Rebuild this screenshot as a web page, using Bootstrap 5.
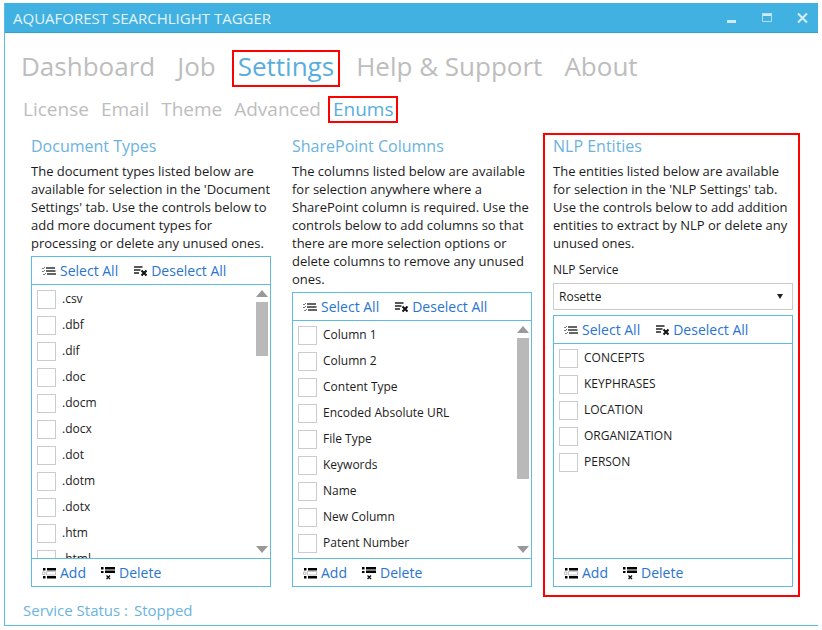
<!DOCTYPE html>
<html lang="en">
<head>
<meta charset="utf-8">
<meta name="viewport" content="width=device-width, initial-scale=1">
<title>Aquaforest Searchlight Tagger</title>
<link rel="stylesheet" href="https://cdn.jsdelivr.net/npm/bootstrap@5.3.0/dist/css/bootstrap.min.css">
<style>
  :root { --accent: #41b1e1; --edge: #5cbce6; --soft: #6bb3de; --link: #2a74d0; --alert: #f00; }
  body { font-family: "Open Sans", "Noto Sans", sans-serif; font-size: 13px; line-height: 18px; color: #1c1c1c; background: #fff; }
  .app-shell { height: 100vh; min-height: 560px; padding: 3px 4px 4px; }
  .app-window { border-left: 1px solid var(--edge); border-bottom: 1px solid var(--edge); }
  .title-bar { background: var(--accent); height: 30px; padding: 0 8px; border-bottom: 1px solid #2fa3d6; }
  .title-bar h1 { font-size: 15px; line-height: 20px; color: #e4f4fb; font-weight: 400; }
  .win-btn { width: 16px; height: 16px; }
  .win-group { gap: 19px; }
  .tab-main { gap: 18px; padding: 21px 14px 0; font-size: 26px; line-height: 25px; }
  .tab-main a { padding: 0 2px 4px; }
  .tab-sub { gap: 10px; padding: 17px 17px 0; font-size: 19px; line-height: 19px; }
  .tab-sub a { padding: 0 1px; }
  .tab-main a, .tab-sub a { color: #bdbdbd; text-decoration: none; white-space: nowrap; }
  .tab-main a.active, .tab-sub a.active { color: #57aede; outline: 2px solid var(--alert); outline-offset: 2px; }
  .enum-grid { display: grid; grid-template-columns: repeat(3, minmax(0, 1fr)); column-gap: 21px; padding: 17px 25px 0 26px; min-height: 0; }
  .enum-col { min-height: 0; }
  .enum-col h2 { font-size: 16px; line-height: 20px; font-weight: 400; color: var(--soft); margin-bottom: 6px; }
  .enum-col p { margin-bottom: 4px; }
  .marked { border: 2px solid var(--alert); margin: -3px -7px -10px -10px; padding: 1px 5px 8px 8px; }
  .nlp-label { font-size: 12px; margin: 5px 0 4px; }
  .nlp-select { font-size: 12px; height: 27px; border: 1px solid #ccc; padding: 0 5px; margin-bottom: 5px; appearance: none; width: 100%; color: #1c1c1c; border-radius: 0;
    background: #fff url("data:image/svg+xml,%3Csvg xmlns='http://www.w3.org/2000/svg' viewBox='0 0 6 5'%3E%3Cpath d='M0 0h6L3 5z' fill='%23222'/%3E%3C/svg%3E") no-repeat right 9px center / 6px 5px; }
  .panel { border: 1px solid var(--edge); min-height: 0; }
  .tool-row { height: 28px; padding: 0 10px; gap: 15px; flex: none; }
  .tool-row.top { border-bottom: 1px solid var(--edge); }
  .tool-row.foot { border-top: 1px solid var(--edge); }
  .tool-btn { border: 0; background: none; padding: 0; color: var(--link); font-size: 14px; line-height: 20px; gap: 4px; white-space: nowrap; }
  .tool-btn svg { width: 14px; height: 14px; flex: none; }
  .items { padding: 1px 0 0 5px; font-size: 12px; min-height: 0; overflow: hidden; }
  .items label { height: 26px; gap: 6px; }
  .items input { appearance: none; width: 19px; height: 19px; border: 1px solid #ccc; background: #fff; margin: 0; flex: none; }
  .scroller { width: 12px; margin: 5px 2px 5px 0; flex: none; }
  .scroller svg { width: 12px; height: 7px; flex: none; }
  .thumb { background: #b9b9b9; margin: 5px 0; }
  .status { color: var(--soft); font-size: 15px; line-height: 20px; padding: 13px 18px 5px; gap: 6px; }
</style>
</head>
<body>
<svg class="d-none" aria-hidden="true">
  <symbol id="i-sel" viewBox="0 0 14 14"><path d="M0 4l1 1 2-2M0 7l1 1 2-2M1 10l1 1 2-2" fill="none" stroke="#555" stroke-width=".8"/><path d="M4 4h9M4 7h9.500M5 10h9" stroke="#333" stroke-width="1.700"/></symbol>
  <symbol id="i-des" viewBox="0 0 14 14"><path d="M1 3h8.500M1 6h6.500M1 9h5" stroke="#222" stroke-width="1.600"/><path d="M8.500 6.500l5 5M13.500 6.500l-5 5" stroke="#111" stroke-width="2"/></symbol>
  <symbol id="i-add" viewBox="0 0 14 14"><path d="M1 2h2.500v2.500H1zM5 2h9v2.500H5zM1 10h2.500v2.500H1zM5 10h9v2.500H5z"/><path d="M4.500 5.500h9v3.500h-9zM.5 6h2.500v2.500H.5z" fill="none" stroke="#aaa" stroke-width=".7"/></symbol>
  <symbol id="i-del" viewBox="0 0 14 14"><path d="M0 1h2.500v2.500H0zM4 1h10v2.500H4zM0 5h2.500v2H0zM4 4.500h10v2.500H4z"/><path d="M5.500 9.500l3.500 3.500M9 9.500l-3.500 3.500" stroke="#111" stroke-width="1.400"/></symbol>
  <symbol id="i-up" viewBox="0 0 12 7"><path d="M0 7L6 0l6 7z" fill="#999"/></symbol>
  <symbol id="i-down" viewBox="0 0 12 7"><path d="M0 0h12L6 7z" fill="#999"/></symbol>
</svg>
<div class="app-shell">
<div class="app-window d-flex flex-column h-100">
  <header class="title-bar d-flex align-items-center justify-content-between flex-shrink-0">
    <h1 class="m-0">AQUAFOREST SEARCHLIGHT TAGGER</h1>
    <div class="win-group d-flex">
      <button class="win-btn btn p-0 border-0 d-flex" type="button" aria-label="Minimize"><svg viewBox="0 0 16 16"><path d="M3 10h9v3H3z" fill="#cdeaf7"/></svg></button>
      <button class="win-btn btn p-0 border-0 d-flex" type="button" aria-label="Maximize"><svg viewBox="0 0 16 16"><path d="M3 3h10v3H3z" fill="#cdeaf7"/><path d="M3.500 3.500h9v8h-9z" fill="none" stroke="#b4dff3"/></svg></button>
      <button class="win-btn btn p-0 border-0 d-flex" type="button" aria-label="Close"><svg viewBox="0 0 16 16"><path d="M4 3.500l9 9M13 3.500l-9 9" stroke="#d6eef9" stroke-width="2"/></svg></button>
    </div>
  </header>
  <nav class="tab-main d-flex" aria-label="Main">
    <a href="#">Dashboard</a><a href="#">Job</a><a href="#" class="active">Settings</a><a href="#">Help &amp; Support</a><a href="#">About</a>
  </nav>
  <nav class="tab-sub d-flex" aria-label="Settings">
    <a href="#">License</a><a href="#">Email</a><a href="#">Theme</a><a href="#">Advanced</a><a href="#" class="active">Enums</a>
  </nav>
  <main class="enum-grid flex-fill">
    <section class="enum-col d-flex flex-column">
      <h2>Document Types</h2>
      <p>The document types listed below are available for selection in the 'Document Settings' tab. Use the controls below to add more document types for processing or delete any unused ones.</p>
      <div class="panel d-flex flex-column flex-fill">
        <div class="tool-row top d-flex align-items-center">
          <button class="tool-btn d-flex align-items-center" type="button"><svg><use href="#i-sel"/></svg>Select All</button>
          <button class="tool-btn d-flex align-items-center" type="button"><svg><use href="#i-des"/></svg>Deselect All</button>
        </div>
        <div class="d-flex flex-fill overflow-hidden">
          <div class="items flex-fill">
            <label class="d-flex align-items-center"><input type="checkbox">.csv</label>
            <label class="d-flex align-items-center"><input type="checkbox">.dbf</label>
            <label class="d-flex align-items-center"><input type="checkbox">.dif</label>
            <label class="d-flex align-items-center"><input type="checkbox">.doc</label>
            <label class="d-flex align-items-center"><input type="checkbox">.docm</label>
            <label class="d-flex align-items-center"><input type="checkbox">.docx</label>
            <label class="d-flex align-items-center"><input type="checkbox">.dot</label>
            <label class="d-flex align-items-center"><input type="checkbox">.dotm</label>
            <label class="d-flex align-items-center"><input type="checkbox">.dotx</label>
            <label class="d-flex align-items-center"><input type="checkbox">.htm</label>
            <label class="d-flex align-items-center"><input type="checkbox">.html</label>
          </div>
          <div class="scroller d-flex flex-column justify-content-between">
            <svg><use href="#i-up"/></svg>
            <div class="flex-fill"><div class="thumb" style="height:54px"></div></div>
            <svg><use href="#i-down"/></svg>
          </div>
        </div>
        <div class="tool-row foot d-flex align-items-center">
          <button class="tool-btn d-flex align-items-center" type="button"><svg><use href="#i-add"/></svg>Add</button>
          <button class="tool-btn d-flex align-items-center" type="button"><svg><use href="#i-del"/></svg>Delete</button>
        </div>
      </div>
    </section>
    <section class="enum-col d-flex flex-column">
      <h2>SharePoint Columns</h2>
      <p>The columns listed below are available for selection anywhere where a SharePoint column is required. Use the controls below to add columns so that there are more selection options or delete columns to remove any unused ones.</p>
      <div class="panel d-flex flex-column flex-fill">
        <div class="tool-row top d-flex align-items-center">
          <button class="tool-btn d-flex align-items-center" type="button"><svg><use href="#i-sel"/></svg>Select All</button>
          <button class="tool-btn d-flex align-items-center" type="button"><svg><use href="#i-des"/></svg>Deselect All</button>
        </div>
        <div class="d-flex flex-fill overflow-hidden">
          <div class="items flex-fill">
            <label class="d-flex align-items-center"><input type="checkbox">Column 1</label>
            <label class="d-flex align-items-center"><input type="checkbox">Column 2</label>
            <label class="d-flex align-items-center"><input type="checkbox">Content Type</label>
            <label class="d-flex align-items-center"><input type="checkbox">Encoded Absolute URL</label>
            <label class="d-flex align-items-center"><input type="checkbox">File Type</label>
            <label class="d-flex align-items-center"><input type="checkbox">Keywords</label>
            <label class="d-flex align-items-center"><input type="checkbox">Name</label>
            <label class="d-flex align-items-center"><input type="checkbox">New Column</label>
            <label class="d-flex align-items-center"><input type="checkbox">Patent Number</label>
          </div>
          <div class="scroller d-flex flex-column justify-content-between">
            <svg><use href="#i-up"/></svg>
            <div class="flex-fill"><div class="thumb" style="height:141px"></div></div>
            <svg><use href="#i-down"/></svg>
          </div>
        </div>
        <div class="tool-row foot d-flex align-items-center">
          <button class="tool-btn d-flex align-items-center" type="button"><svg><use href="#i-add"/></svg>Add</button>
          <button class="tool-btn d-flex align-items-center" type="button"><svg><use href="#i-del"/></svg>Delete</button>
        </div>
      </div>
    </section>
    <section class="enum-col marked d-flex flex-column">
      <h2>NLP Entities</h2>
      <p>The entities listed below are available for selection in the 'NLP Settings' tab. Use the controls below to add addition entities to extract by NLP or delete any unused ones.</p>
      <label class="nlp-label" for="nlp">NLP Service</label>
      <select class="nlp-select flex-shrink-0" id="nlp"><option>Rosette</option></select>
      <div class="panel d-flex flex-column flex-fill">
        <div class="tool-row top d-flex align-items-center">
          <button class="tool-btn d-flex align-items-center" type="button"><svg><use href="#i-sel"/></svg>Select All</button>
          <button class="tool-btn d-flex align-items-center" type="button"><svg><use href="#i-des"/></svg>Deselect All</button>
        </div>
        <div class="items flex-fill">
          <label class="d-flex align-items-center"><input type="checkbox">CONCEPTS</label>
          <label class="d-flex align-items-center"><input type="checkbox">KEYPHRASES</label>
          <label class="d-flex align-items-center"><input type="checkbox">LOCATION</label>
          <label class="d-flex align-items-center"><input type="checkbox">ORGANIZATION</label>
          <label class="d-flex align-items-center"><input type="checkbox">PERSON</label>
        </div>
        <div class="tool-row foot d-flex align-items-center">
          <button class="tool-btn d-flex align-items-center" type="button"><svg><use href="#i-add"/></svg>Add</button>
          <button class="tool-btn d-flex align-items-center" type="button"><svg><use href="#i-del"/></svg>Delete</button>
        </div>
      </div>
    </section>
  </main>
  <footer class="status d-flex"><span>Service Status :</span><span>Stopped</span></footer>
</div>
</div>
<script src="https://cdn.jsdelivr.net/npm/bootstrap@5.3.0/dist/js/bootstrap.bundle.min.js"></script>
</body>
</html>
